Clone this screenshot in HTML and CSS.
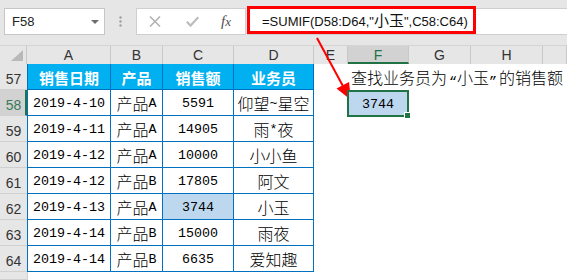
FILE: index.html
```html
<!DOCTYPE html>
<html lang="zh-CN">
<head>
<meta charset="utf-8">
<link rel="stylesheet" href="styles.css">
</head>
<body>
<div class="app">
  <div class="toolbar">
    <div class="namebox">
      <span class="nb-text">F58</span>
      <svg class="nb-arrow" width="8" height="4" viewBox="0 0 8 4"><polygon points="0,0 8,0 4,4" fill="#6d6d6d"/></svg>
    </div>
    <div class="dots">
      <svg width="3" height="11" viewBox="0 0 3 11"><circle cx="1.5" cy="1.5" r="1.2" fill="#a0a0a0"/><circle cx="1.5" cy="5.5" r="1.2" fill="#a0a0a0"/><circle cx="1.5" cy="9.5" r="1.2" fill="#a0a0a0"/></svg>
    </div>
    <div class="fbtns">
      <svg class="ic-x" width="12" height="11" viewBox="0 0 12 11"><path d="M1 0.5 L11 10.5 M11 0.5 L1 10.5" stroke="#b3b3b3" stroke-width="1.6" fill="none"/></svg>
      <svg class="ic-ok" width="13" height="11" viewBox="0 0 13 11"><path d="M0.8 5.8 L4.6 9.6 L12.3 1.2" stroke="#bdbdbd" stroke-width="2.2" fill="none"/></svg>
      <span class="fx">f<span class="fx-x">x</span></span>
    </div>
    <div class="fbar">
      <div class="formula">=SUMIF(D58:D64,"<span class="fz">小玉</span>",C58:C64)</div>
    </div>
  </div>

  <div class="sheet">
    <div class="corner"><svg width="12" height="11" viewBox="0 0 12 11"><polygon points="12,0 12,11 0,11" fill="#b9b9b9"/></svg></div>
    <div class="ch">A</div>
    <div class="ch">B</div>
    <div class="ch">C</div>
    <div class="ch">D</div>
    <div class="ch">E</div>
    <div class="ch ch-sel">F</div>
    <div class="ch">G</div>
    <div class="ch">H</div>
    <div class="ch"></div>

    <div class="rh">57</div>
    <div class="th first">销售日期</div>
    <div class="th">产品</div>
    <div class="th">销售额</div>
    <div class="th">业务员</div>
    <div class="e"></div>
    <div class="note">查找业务员为<span class="q ql">“</span>小玉<span class="q qr">”</span>的销售额</div>

    <div class="rh rh-sel">58</div>
    <div class="td first num">2019-4-10</div>
    <div class="td">产品<span class="n">A</span></div>
    <div class="td num">5591</div>
    <div class="td">仰望<span class="n">~</span>星空</div>
    <div class="e"></div>
    <div class="e sel num">3744</div>
    <div class="e"></div>
    <div class="e"></div>
    <div class="e"></div>

    <div class="rh">59</div>
    <div class="td first num">2019-4-11</div>
    <div class="td">产品<span class="n">A</span></div>
    <div class="td num">14905</div>
    <div class="td">雨<span class="n">*</span>夜</div>
    <div class="e"></div><div class="e"></div><div class="e"></div><div class="e"></div><div class="e"></div>

    <div class="rh">60</div>
    <div class="td first num">2019-4-12</div>
    <div class="td">产品<span class="n">A</span></div>
    <div class="td num">10000</div>
    <div class="td">小小鱼</div>
    <div class="e"></div><div class="e"></div><div class="e"></div><div class="e"></div><div class="e"></div>

    <div class="rh">61</div>
    <div class="td first num">2019-4-12</div>
    <div class="td">产品<span class="n">B</span></div>
    <div class="td num">17805</div>
    <div class="td">阿文</div>
    <div class="e"></div><div class="e"></div><div class="e"></div><div class="e"></div><div class="e"></div>

    <div class="rh">62</div>
    <div class="td first num">2019-4-13</div>
    <div class="td">产品<span class="n">A</span></div>
    <div class="td num hl">3744</div>
    <div class="td">小玉</div>
    <div class="e"></div><div class="e"></div><div class="e"></div><div class="e"></div><div class="e"></div>

    <div class="rh">63</div>
    <div class="td first num">2019-4-14</div>
    <div class="td">产品<span class="n">B</span></div>
    <div class="td num">15000</div>
    <div class="td">雨夜</div>
    <div class="e"></div><div class="e"></div><div class="e"></div><div class="e"></div><div class="e"></div>

    <div class="rh">64</div>
    <div class="td first num">2019-4-14</div>
    <div class="td">产品<span class="n">B</span></div>
    <div class="td num">6635</div>
    <div class="td">爱知趣</div>
    <div class="e"></div><div class="e"></div><div class="e"></div><div class="e"></div><div class="e"></div>

    <div class="rh"></div>
    <div class="e after"></div>
    <div class="e"></div><div class="e"></div><div class="e"></div><div class="e"></div><div class="e"></div><div class="e"></div><div class="e"></div><div class="e"></div>
  </div>

  <svg class="arrow" width="567" height="280" viewBox="0 0 567 280">
    <line x1="317" y1="38" x2="344" y2="88" stroke="#ff0000" stroke-width="2"/>
    <polygon points="351,100 336.5,88.5 349,82" fill="#ff0000"/>
  </svg>
</div>
</body>
</html>
```

FILE: styles.css
```css
body {
  margin: 0;
  background: #ffffff;
}

.app {
  position: relative;
  width: 567px;
  height: 280px;
  overflow: hidden;
  background: #ffffff;
  font-family: "Liberation Sans", Arial, sans-serif;
}

/* ---------- toolbar ---------- */
.toolbar {
  height: 46px;
  box-sizing: border-box;
  background: #e6e6e6;
  border-bottom: 1px solid #d4d4d4;
  display: flex;
  align-items: flex-start;
  padding: 8px 0 0 4px;
}

.namebox {
  width: 101px;
  height: 27px;
  box-sizing: border-box;
  background: #ffffff;
  border: 1px solid #c6c6c6;
  display: flex;
  align-items: center;
  justify-content: space-between;
  padding: 0 5px 0 7px;
}

.nb-text {
  font-size: 13px;
  color: #222;
}

.nb-arrow {
  display: block;
}

.dots {
  width: 31px;
  height: 27px;
  display: flex;
  align-items: center;
  justify-content: center;
}

.dots svg {
  display: block;
}

.fbtns {
  width: 110px;
  height: 27px;
  box-sizing: border-box;
  background: #ffffff;
  border: 1px solid #cfcfcf;
  display: flex;
  align-items: center;
  padding-left: 12px;
}

.fbtns svg {
  display: block;
}

.ic-ok {
  margin-left: 25px;
}

.fx {
  margin-left: 22px;
  font-family: "Liberation Serif", serif;
  font-style: italic;
  font-size: 15px;
  color: #505050;
  line-height: 1;
  padding-bottom: 1px;
}

.fx-x {
  font-size: 13px;
}

.fbar {
  flex: 1;
  height: 27px;
  box-sizing: border-box;
  margin-left: 1px;
  background: #ffffff;
  border-top: 1px solid #cfcfcf;
  border-bottom: 1px solid #cfcfcf;
}

.formula {
  width: 229px;
  height: 28px;
  box-sizing: border-box;
  margin-top: -3px;
  border: 3px solid #ff0000;
  padding-left: 12px;
  font-size: 13px;
  line-height: 22px;
  color: #111;
  white-space: nowrap;
}

.fz {
  font-family: "Noto Sans CJK SC", sans-serif;
  font-size: 15px;
}

/* ---------- sheet ---------- */
.sheet {
  display: grid;
  grid-template-columns: 27px 84px 52px 71px 80px 34px 61px 62px 72px 1fr;
  grid-template-rows: 18px repeat(8, 26px) 8px;
}

.sheet > div {
  box-sizing: border-box;
  min-width: 0;
}

.corner {
  background: #e6e6e6;
  border-right: 1px solid #c8c8c8;
  display: flex;
  align-items: flex-end;
  justify-content: flex-end;
  padding: 0 3px 3px 0;
}

.corner svg {
  display: block;
}

.ch {
  background: #e6e6e6;
  border-right: 1px solid #c8c8c8;
  display: flex;
  align-items: center;
  justify-content: center;
  font-size: 14px;
  color: #333;
}

.ch-sel {
  background: #d2d2d2;
  color: #217346;
  border-bottom: 2px solid #217346;
  padding-top: 2px;
}

.rh {
  background: #e6e6e6;
  border-bottom: 1px solid #d0d0d0;
  display: flex;
  align-items: flex-end;
  justify-content: center;
  padding-bottom: 2px;
  font-size: 14px;
  color: #333;
}

.rh-sel {
  background: #d2d2d2;
  color: #3a7a5a;
  border-right: 2px solid #217346;
  padding-left: 2px;
}

.th {
  background: #00b0f0;
  color: #ffffff;
  font-family: "Noto Sans CJK SC", sans-serif;
  font-weight: bold;
  font-size: 15px;
  border-right: 1px solid #0070c0;
  border-bottom: 1px solid #0070c0;
  display: flex;
  align-items: center;
  justify-content: center;
  padding-top: 1px;
}

.td {
  background: #ffffff;
  color: #000;
  font-family: "Noto Sans CJK SC", sans-serif;
  font-weight: 300;
  font-size: 16px;
  border-right: 1px solid #0070c0;
  border-bottom: 1px solid #0070c0;
  display: flex;
  align-items: center;
  justify-content: center;
  white-space: nowrap;
  padding-top: 1px;
}

.first {
  border-left: 1px solid #0070c0;
}

.after {
  border-left: 1px solid #d0d0d0;
}

.num,
.n {
  font-family: "Liberation Mono", "DejaVu Sans Mono", monospace;
  font-weight: normal;
  font-size: 13.33px;
}

.num {
  padding-top: 2px;
}

.hl {
  background: #bdd7ee;
}

.e {
  background: transparent;
}

.note {
  grid-column: 7 / span 4;
  display: flex;
  align-items: flex-end;
  padding: 0 0 1px 3px;
  font-family: "Noto Sans CJK SC", sans-serif;
  font-weight: 300;
  font-size: 16px;
  color: #000;
  white-space: nowrap;
}

.q {
  font-family: "Liberation Mono", monospace;
  font-weight: normal;
  font-size: 13.33px;
}

.ql {
  padding-left: 2px;
}

.qr {
  padding-right: 2px;
}

.sel {
  position: relative;
  z-index: 1;
  background: #bdd7ee;
  border: 2px solid #217346;
  margin: 0 0 -1px -1px;
  display: flex;
  align-items: center;
  justify-content: center;
  color: #000;
  padding-top: 1px;
}

.sel::after {
  content: "";
  position: absolute;
  right: -4px;
  bottom: -4px;
  width: 5px;
  height: 5px;
  background: #217346;
  border: 1px solid #ffffff;
}

.arrow {
  position: absolute;
  left: 0;
  top: 0;
  pointer-events: none;
}
```
